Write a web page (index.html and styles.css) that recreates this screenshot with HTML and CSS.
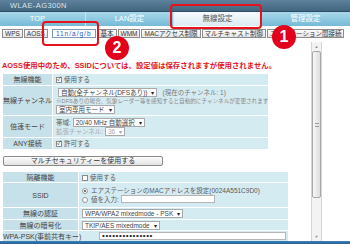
FILE: index.html
```html
<!DOCTYPE html>
<html lang="ja">

<head>
    <meta charset="UTF-8">
    <meta name="viewport" content="width=device-width, initial-scale=1.0">
    <link rel="stylesheet" href="styles.css">
    <title>無線設定</title>
</head>

<body>
    <div class="page">
        <div class="brand">WLAE-AG300N</div>

        <div class="tabs">
            <div class="tab tab-first">TOP</div>
            <div class="tab">LAN設定</div>
            <div class="tab active">無線設定</div>
            <div class="tab">管理設定</div>
        </div>

        <div class="subtabs">
            <span class="sub">WPS</span>
            <span class="sub">AOSS</span>
            <span class="sub on">11n/a/g/b</span>
            <span class="sub">基本</span>
            <span class="sub">WMM</span>
            <span class="sub">MACアクセス制限</span>
            <span class="sub">マルチキャスト制御</span>
            <span class="sub">エアステーション間接続</span>
        </div>

        <div class="frame">
            <div class="content">
                <p class="notice">AOSS使用中のため、SSIDについては、設定値は保存されますが使用されません。</p>

                <table class="form form1">
                    <tr>
                        <td class="lbl h11">無線機能</td>
                        <td><span class="chk on"></span>使用する</td>
                    </tr>
                    <tr>
                        <td class="lbl h29">無線チャンネル</td>
                        <td>
                            <div class="line"><span class="sel sel-ch">自動(全チャンネル(DFSあり))<i>▾</i></span><span class="dim">(現在のチャンネル: 1)</span></div>
                            <div class="note">※DFSありの場合、気象レーダー等を感知すると自動的にチャンネルが変更されます</div>
                            <div class="line"><span class="sel">室内専用モード<i>▾</i></span></div>
                        </td>
                    </tr>
                    <tr>
                        <td class="lbl h21">倍速モード</td>
                        <td>
                            <div class="line">帯域: <span class="sel">20/40 MHz 自動選択<i>▾</i></span></div>
                            <div class="line off">拡張チャンネル: <span class="sel sel-off">36<i>▾</i></span></div>
                        </td>
                    </tr>
                    <tr>
                        <td class="lbl h11">ANY接続</td>
                        <td><span class="chk on"></span>許可する</td>
                    </tr>
                </table>

                <button class="multi">マルチセキュリティーを使用する</button>

                <table class="form form2">
                    <tr>
                        <td class="lbl h10">隔離機能</td>
                        <td><span class="chk"></span>使用する</td>
                    </tr>
                    <tr>
                        <td class="lbl h24">SSID</td>
                        <td>
                            <div class="line"><span class="radio on"></span>エアステーションのMACアドレスを設定(0024A551C9D0)</div>
                            <div class="line"><span class="radio"></span>値を入力: <span class="field"></span></div>
                        </td>
                    </tr>
                    <tr>
                        <td class="lbl h11">無線の認証</td>
                        <td><span class="sel">WPA/WPA2 mixedmode - PSK<i>▾</i></span></td>
                    </tr>
                    <tr>
                        <td class="lbl h10">無線の暗号化</td>
                        <td><span class="sel">TKIP/AES mixedmode<i>▾</i></span></td>
                    </tr>
                    <tr>
                        <td class="lbl h10">WPA-PSK(事前共有キー)</td>
                        <td><span class="field field-key">•••••••••••••••</span></td>
                    </tr>
                </table>
            </div>

            <div class="scroll">
                <div class="sb-btn">▲</div>
                <div class="sb-track">
                    <div class="sb-thumb"><span class="grip"></span></div>
                </div>
                <div class="sb-btn">▼</div>
            </div>
        </div>

        <div class="bottombar"></div>

        <!-- annotations -->
        <div class="mark mark-tab"></div>
        <div class="mark mark-sub"></div>
        <div class="num num-1">1</div>
        <div class="num num-2">2</div>
    </div>
</body>

</html>
```

FILE: styles.css
```css
* {
    box-sizing: border-box;
}

body {
    margin: 0;
    background-color: #fff;
    font-family: "Liberation Sans", "Noto Sans CJK JP", sans-serif;
    color: #555;
}

.page {
    position: relative;
    width: 350px;
    height: 244px;
    overflow: hidden;
}

/* header */

.brand {
    height: 12px;
    padding-left: 10px;
    background: linear-gradient(#5f819d, #41667f);
    border-bottom: 1px solid #2d4d67;
    color: #dbe3ea;
    font-size: 7.5px;
    line-height: 11px;
    letter-spacing: 0.4px;
}

.tabs {
    display: flex;
    height: 14px;
    background: linear-gradient(#a9d8ea, #76bad6);
}

.tab {
    width: 88px;
    border-left: 1px solid #c6e5f1;
    color: #fff;
    font-size: 7.5px;
    line-height: 14px;
    text-align: center;
}

.tab-first {
    width: 85px;
    padding-right: 10px;
    border-left: 0;
}

.tab.active {
    background: linear-gradient(#f6fafc, #dbecf3);
    color: #555;
}

.subtabs {
    display: flex;
    gap: 1px;
    height: 14px;
    padding: 3px 0 0 2px;
}

.sub {
    height: 9px;
    padding: 0 2px;
    border: 1px solid #8d8d8d;
    background: linear-gradient(#fff, #e4e4e4);
    color: #333;
    font-size: 6.5px;
    line-height: 7px;
    white-space: nowrap;
}

.sub.on {
    margin: 0 1px 0 3px;
    padding: 0 3px;
    border-color: #7d9bb6;
    background: #fff;
    color: #2b55c6;
    letter-spacing: 1px;
}

/* frame */

.frame {
    display: flex;
    height: 201px;
}

.content {
    width: 311px;
    padding: 21px 0 0 3px;
}

.notice {
    margin: 0 0 2px -1px;
    color: #e3141b;
    font-size: 7.4px;
    font-weight: bold;
    line-height: 10px;
    white-space: nowrap;
}

.form {
    margin-left: -1px;
    border-collapse: separate;
    border-spacing: 1px;
    font-size: 6.5px;
    table-layout: fixed;
}

.form td {
    padding: 0 3px;
    background-color: #d5ebf2;
    color: #5a5a5a;
    line-height: 9px;
    vertical-align: middle;
    white-space: nowrap;
}

.form td.lbl {
    padding: 0;
    background-color: #c7e1eb;
    color: #444;
    font-size: 7px;
    text-align: center;
}

.form1 {
    width: 267px;
}

.form1 .lbl {
    width: 49px;
}

.form2 {
    width: 287px;
}

.form2 .lbl {
    width: 75px;
}

.h10 { height: 10px; }
.h11 { height: 11px; }
.h21 { height: 21px; }
.h24 { height: 24px; }
.h29 { height: 29px; }

.line {
    height: 9px;
}

.note {
    color: #888;
    font-size: 5.6px;
    line-height: 8px;
}

.dim {
    margin-left: 5px;
    color: #777;
}

.off {
    color: #aaa;
}

.sel {
    display: inline-block;
    height: 9px;
    padding: 0 2px;
    border: 1px solid #a9a9a9;
    background-color: #fff;
    color: #444;
    line-height: 7px;
    vertical-align: top;
}

.sel i {
    margin-left: 4px;
    font-style: normal;
    font-size: 6px;
    color: #222;
}

.sel-ch {
    margin-left: 2px;
}

.sel-off {
    width: 20px;
    color: #aaa;
}

.sel-off i {
    color: #aaa;
}

.chk {
    display: inline-block;
    position: relative;
    width: 6px;
    height: 6px;
    margin-right: 2px;
    border: 1px solid #8a8a8a;
    background-color: #fff;
    vertical-align: -1px;
}

.chk.on::after {
    content: "✓";
    position: absolute;
    left: 0;
    top: -3px;
    color: #333;
    font-size: 6px;
}

.radio {
    display: inline-block;
    position: relative;
    width: 6px;
    height: 6px;
    margin-right: 3px;
    border: 1px solid #999;
    border-radius: 50%;
    background-color: #fff;
    vertical-align: -1px;
}

.radio.on::after {
    content: "";
    position: absolute;
    left: 1px;
    top: 1px;
    width: 2px;
    height: 2px;
    border-radius: 50%;
    background-color: #444;
}

.field {
    display: inline-block;
    width: 94px;
    height: 8px;
    border: 1px solid #b5b5b5;
    background-color: #fff;
    vertical-align: top;
}

.field-key {
    width: 187px;
    margin-left: 17px;
    padding-left: 2px;
    color: #222;
    font-size: 8px;
    line-height: 6px;
    letter-spacing: 0.6px;
}

.multi {
    display: block;
    width: 160px;
    height: 10px;
    margin: 6px 0 5px;
    padding: 0;
    border: 1px solid #8a8a8a;
    border-radius: 2px;
    background: linear-gradient(#fdfdfd, #e2e2e2);
    color: #333;
    font-family: inherit;
    font-size: 7px;
    line-height: 8px;
}

/* scrollbar */

.scroll {
    display: flex;
    flex-direction: column;
    width: 11px;
    margin-top: 2px;
    border-left: 1px solid #d6d6d6;
    border-right: 1px solid #d6d6d6;
    background-color: #f3f3f3;
}

.sb-btn {
    height: 9px;
    color: #888;
    font-size: 4px;
    line-height: 9px;
    text-align: center;
}

.sb-track {
    flex: 1;
    padding-bottom: 34px;
}

.sb-thumb {
    display: flex;
    align-items: center;
    justify-content: center;
    height: 100%;
    border: 1px solid #a8a8a8;
    border-radius: 2px;
    background: linear-gradient(90deg, #f7f7f7, #dedede);
}

.grip {
    width: 4px;
    height: 4px;
    border-top: 1px solid #999;
    border-bottom: 1px solid #999;
}

.bottombar {
    height: 3px;
    background: linear-gradient(#3d82b8, #245f95);
}

/* annotations */

.mark {
    position: absolute;
    border: 2px solid #e8121c;
    border-radius: 4px;
}

.mark-tab {
    left: 170px;
    top: 4px;
    width: 92px;
    height: 25px;
}

.mark-sub {
    left: 42px;
    top: 21px;
    width: 57px;
    height: 25px;
}

.num {
    position: absolute;
    width: 24px;
    height: 24px;
    border-radius: 50%;
    background-color: #e3001b;
    color: #fff;
    font-family: "Liberation Sans", sans-serif;
    font-size: 16px;
    font-weight: bold;
    line-height: 24px;
    text-align: center;
}

.num-1 {
    left: 272px;
    top: 25px;
}

.num-2 {
    left: 105px;
    top: 36px;
}
```
